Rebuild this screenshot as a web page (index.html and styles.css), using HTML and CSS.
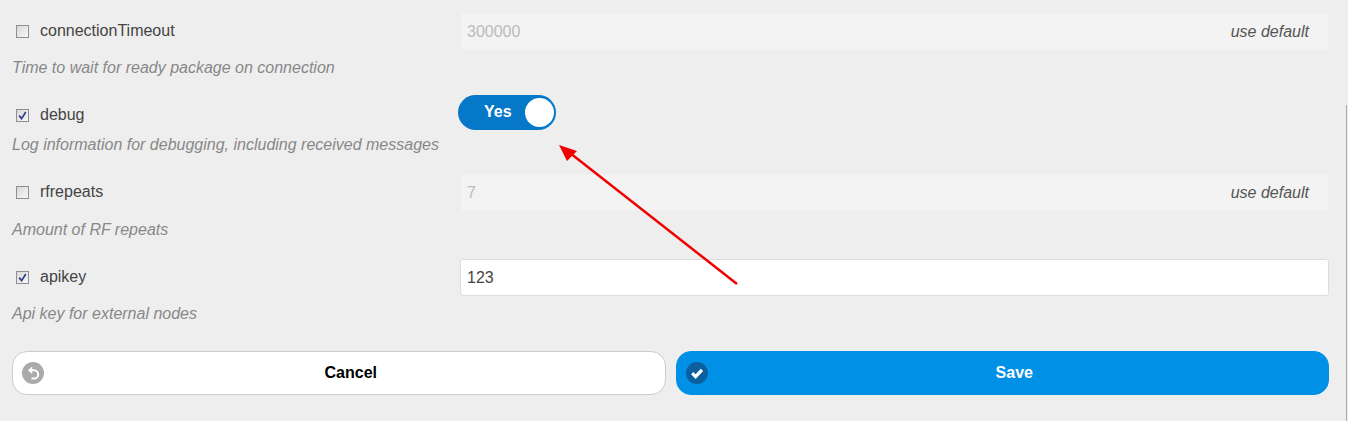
FILE: index.html
```html
<!DOCTYPE html>
<html lang="en">
<head>
    <meta charset="UTF-8">
    <meta name="viewport" content="width=device-width, initial-scale=1.0">
    <title>Node settings</title>
    <link rel="stylesheet" href="styles.css">
</head>
<body>

    <div class="panel">
        <!-- connectionTimeout -->
        <div class="setting first">
            <div class="setting-row">
                <label class="setting-name"><span class="check"></span>connectionTimeout</label>
                <div class="field disabled"><span>300000</span><em>use default</em></div>
            </div>
            <p class="hint">Time to wait for ready package on connection</p>
        </div>

        <!-- debug -->
        <div class="setting toggle-setting">
            <div class="setting-row">
                <label class="setting-name"><span class="check on"><svg viewBox="0 0 9 9" width="9" height="9"><path d="M1.2 4.6 L3.6 7.6 L7.8 1" fill="none" stroke="#2f3f8f" stroke-width="1.7"/></svg></span>debug</label>
                <div class="toggle"><span>Yes</span><i class="knob"></i></div>
            </div>
            <p class="hint">Log information for debugging, including received messages</p>
        </div>

        <!-- rfrepeats -->
        <div class="setting rf-setting">
            <div class="setting-row">
                <label class="setting-name"><span class="check"></span>rfrepeats</label>
                <div class="field disabled"><span>7</span><em>use default</em></div>
            </div>
            <p class="hint">Amount of RF repeats</p>
        </div>

        <!-- apikey -->
        <div class="setting">
            <div class="setting-row">
                <label class="setting-name"><span class="check on"><svg viewBox="0 0 9 9" width="9" height="9"><path d="M1.2 4.6 L3.6 7.6 L7.8 1" fill="none" stroke="#2f3f8f" stroke-width="1.7"/></svg></span>apikey</label>
                <div class="field"><span>123</span></div>
            </div>
            <p class="hint">Api key for external nodes</p>
        </div>

        <div class="buttons">
            <button class="btn btn-cancel" type="button">
                <span class="btn-icon">
                    <svg viewBox="0 0 22 22" width="22" height="22"><path d="M7.5 8.2 H12 a4.2 4.2 0 0 1 0 8.4 H9.5" fill="none" stroke="#fff" stroke-width="2"/><path d="M10.2 4.4 L6 8.2 L10.2 12 Z" fill="#fff"/></svg>
                </span>
                Cancel
            </button>
            <button class="btn btn-save" type="button">
                <span class="btn-icon">
                    <svg viewBox="0 0 22 22" width="22" height="22"><path d="M6.2 11.2 L9.6 14.6 L16 7.8" fill="none" stroke="#fff" stroke-width="3.2"/></svg>
                </span>
                Save
            </button>
        </div>
    </div>

    <div class="scroll-edge"></div>

    <!-- arrow drawn over the screenshot -->
    <svg class="arrow" width="1348" height="421" viewBox="0 0 1348 421">
        <line x1="737" y1="284" x2="570" y2="153" stroke="#f00000" stroke-width="2.5"/>
        <polygon points="559,145 577,151 567,161" fill="#f00000"/>
    </svg>

</body>
</html>
```

FILE: styles.css
```css
/* page */
html, body {
    height: 100%;
}

body {
    margin: 0;
    overflow: hidden;
    background-color: #eeeeee;
    color: #444;
    font-family: "Liberation Sans", Arial, sans-serif;
    font-size: 16px;
}

.panel {
    width: 1317px;
    padding: 13px 0 0 12px;
}

/* one setting */
.setting {
    margin-bottom: 20px;
}

.setting-row {
    display: flex;
    align-items: center;
    height: 37px;
}

.setting-name {
    display: flex;
    align-items: center;
    width: 448px;
    padding-left: 4px;
    box-sizing: border-box;
    margin-top: -1px;
}

.check {
    display: flex;
    align-items: center;
    justify-content: center;
    box-sizing: border-box;
    width: 13px;
    height: 13px;
    margin-right: 11px;
    border: 1px solid #8e8f8f;
    background: linear-gradient(135deg, #d8d8da, #f8f8f8);
}

.hint {
    margin: 9px 0 0;
    height: 18px;
    line-height: 18px;
    color: #888;
    font-style: italic;
}

.toggle-setting .hint {
    margin-top: 2px;
}

.rf-setting .hint {
    margin-top: 10px;
}

/* text fields */
.field {
    flex: 1;
    display: flex;
    align-items: center;
    justify-content: space-between;
    height: 37px;
    box-sizing: border-box;
    padding: 0 19px 0 6px;
    background-color: #fff;
    border: 1px solid #ddd;
    border-radius: 3px;
}

.field.disabled {
    background-color: #f3f3f3;
    border-color: #f0f0f0;
    color: #bbb;
}

.field em {
    color: #555;
}

/* switch */
.toggle {
    display: flex;
    align-items: center;
    box-sizing: border-box;
    width: 98px;
    height: 35px;
    margin-left: -2px;
    margin-top: -7px;
    padding: 0 2px 0 26px;
    justify-content: space-between;
    background-color: #0678c8;
    border-radius: 18px;
    color: #fff;
    font-weight: bold;
}

.toggle span {
    margin-top: -1px;
}

.knob {
    width: 29px;
    height: 29px;
    background-color: #fff;
    border-radius: 50%;
}

/* buttons */
.buttons {
    display: flex;
    gap: 10px;
    margin-top: 28px;
}

.btn {
    position: relative;
    flex: 1;
    height: 44px;
    padding-left: 30px;
    border-radius: 15px;
    border: 1px solid #ccc;
    font-family: inherit;
    font-size: 16px;
    font-weight: bold;
}

.btn-cancel {
    background-color: #fff;
    color: #000;
}

.btn-save {
    background-color: #0090e6;
    border-color: #0090e6;
    color: #fff;
}

.btn-icon {
    position: absolute;
    left: 9px;
    top: 10px;
    width: 22px;
    height: 22px;
    border-radius: 50%;
    background-color: #aaa;
}

.btn-save .btn-icon {
    background-color: #0a5f9e;
}

.btn-icon svg {
    display: block;
}

/* right edge of the window */
.scroll-edge {
    position: absolute;
    top: 105px;
    right: 1px;
    bottom: 0;
    width: 1px;
    background-color: #aaa;
}

.arrow {
    position: absolute;
    top: 0;
    left: 0;
    pointer-events: none;
}
```
